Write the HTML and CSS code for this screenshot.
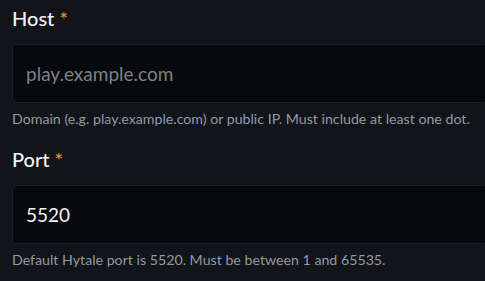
FILE: index.html
```html
<!DOCTYPE html>
<html>
<head>
<meta charset="utf-8">
<link rel="stylesheet" href="styles.css">
</head>
<body>
<div class="form">
  <div class="field">
    <label class="label">Host <span class="req">*</span></label>
    <div class="input placeholder">play.example.com</div>
    <p class="hint">Domain (e.g. play.example.com) or public IP. Must include at least one dot.</p>
  </div>
  <div class="field">
    <label class="label">Port <span class="req">*</span></label>
    <div class="input value">5520</div>
    <p class="hint">Default Hytale port is 5520. Must be between 1 and 65535.</p>
  </div>
</div>
</body>
</html>
```
FILE: styles.css
```css
html, body {
  margin: 0;
  padding: 0;
  background: #111419;
  overflow: hidden;
}
body {
  font-family: Lato, "Noto Sans", sans-serif;
  width: 485px;
  height: 281px;
}
.form {
  display: flex;
  flex-direction: column;
  padding: 4px 0 0 12px;
  gap: 17px;
}
.field {
  display: flex;
  flex-direction: column;
}
.label {
  display: block;
  font-size: 20px;
  line-height: 28px;
  color: #f2f4f7;
  font-weight: 500;
}
.req {
  color: #e0962f;
}
.input {
  margin-top: 12px;
  height: 57px;
  border: 1px solid #1c2129;
  border-right-color: transparent;
  border-radius: 5px 0 0 5px;
  background: #07090c;
  display: flex;
  align-items: center;
  padding-left: 13px;
  font-size: 19px;
}
.placeholder { color: #7c828b; }
.value { color: #f2f4f7; }
.hint {
  margin: 7px 0 0;
  font-size: 14.2px;
  line-height: 18px;
  color: #939aa3;
}
```
